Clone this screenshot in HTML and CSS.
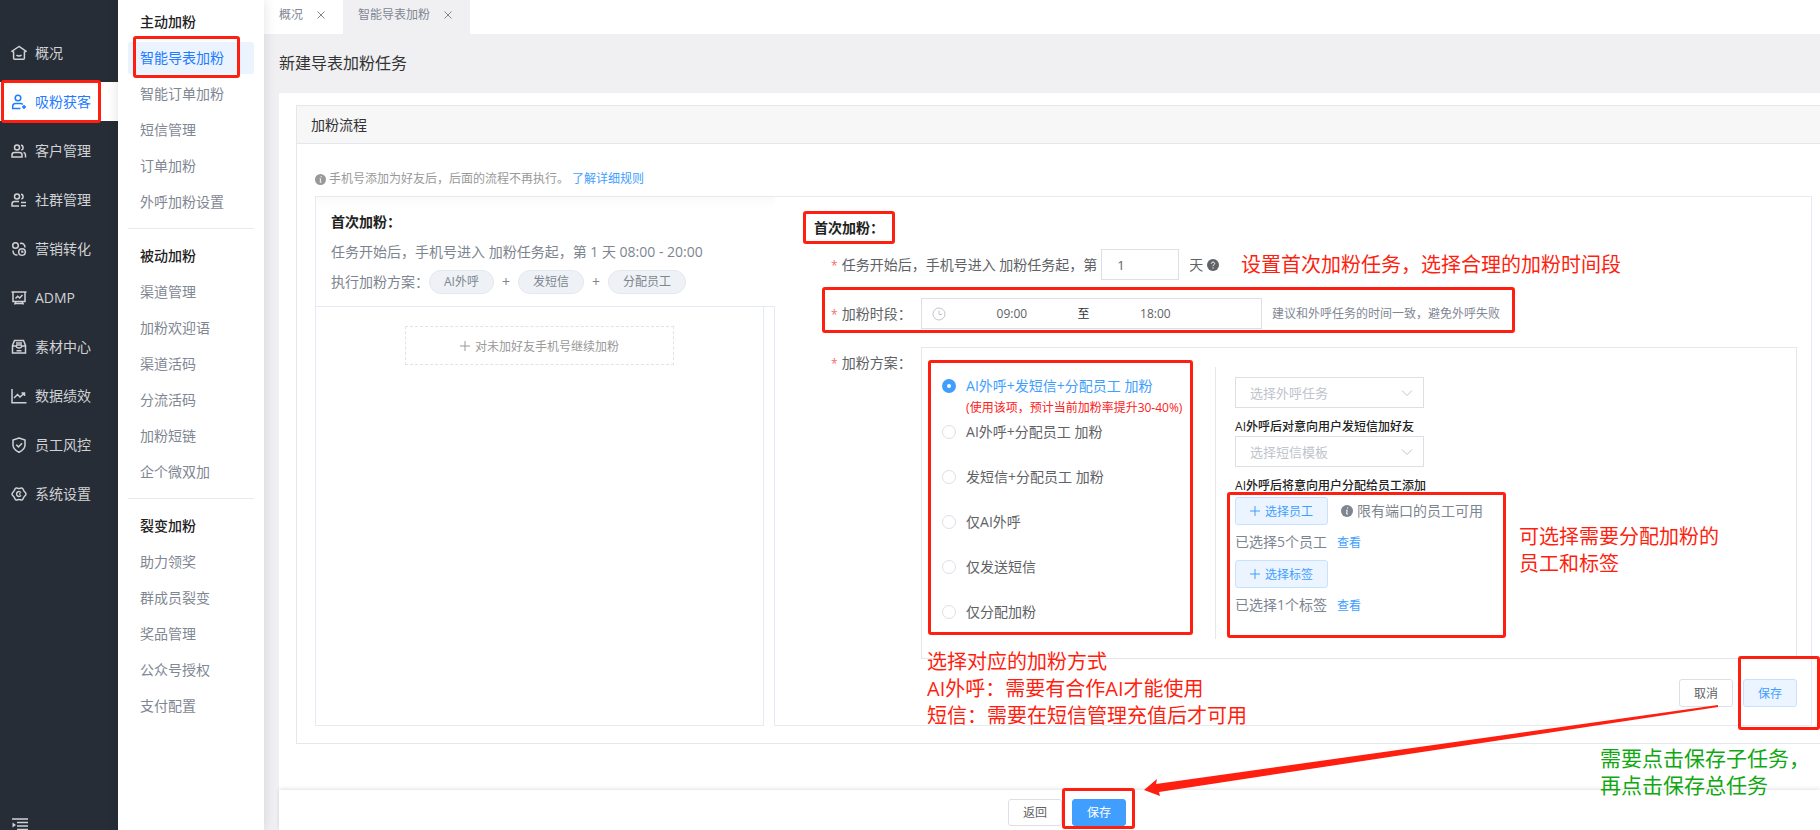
FILE: index.html
```
<!DOCTYPE html>
<html lang="zh-CN">
<head>
  <meta charset="UTF-8" />
  <meta name="viewport" content="width=device-width, initial-scale=1.0"/>
  <title>新建导表加粉任务</title>
  <link rel="stylesheet" href="styles.css">
</head>
<body>

  <!-- 一级菜单 -->
  <nav class="sidebar">
    <a href="#">
      <svg class="icon" viewBox="0 0 16 16"><path d="M8 1.500 1 6.200l1.600.8v6.200a1 1 0 0 0 1 1h8.800a1 1 0 0 0 1-1V7l1.600-.8z"/><path d="M5.500 10c1.200 1.300 3.800 1.300 5 0"/></svg>
      概况
    </a>
    <a href="#" class="active">
      <svg class="icon" viewBox="0 0 16 16"><circle cx="7" cy="4" r="2.800"/><path d="M9.500 14.500H1.700v-2.200c0-1.600 1.200-2.800 2.800-2.800h5c1 0 1.800.4 2.300 1M13 11v4M11 13h4"/></svg>
      吸粉获客
      <span class="mark mark-nav"></span>
    </a>
    <a href="#">
      <svg class="icon" viewBox="0 0 16 16"><circle cx="6" cy="4.500" r="2.500"/><path d="M1 14v-2c0-1.400 1-2.400 2.400-2.400h5.200c1.400 0 2.400 1 2.400 2.400v2zM10 2.200c2.600.2 2.800 4.200.3 4.700M12.500 9.600c1.300.3 2 1.200 2 2.400v2.500"/></svg>
      客户管理
    </a>
    <a href="#">
      <svg class="icon" viewBox="0 0 16 16"><circle cx="6" cy="4.500" r="2.500"/><path d="M8 14H1v-2c0-1.400 1-2.400 2.400-2.400H8M10 2.200c2.600.2 2.800 4.200.3 4.700M10 10.500h5M10 13.700h5"/></svg>
      社群管理
    </a>
    <a href="#">
      <svg class="icon" viewBox="0 0 16 16"><circle cx="4.500" cy="4.500" r="2.800"/><circle cx="11" cy="11" r="3.300"/><path d="M9 2.500c3-.6 5 .8 5 4M2 9.500c0 3 1.500 4.700 4.500 4.500M11 9.500v1.500h1.500"/></svg>
      营销转化
    </a>
    <a href="#">
      <svg class="icon" viewBox="0 0 16 16"><path d="M.5 2h15M2 2v9.500h12V2M4.500 8.500l2.200-2.300 2 1.800L11.500 5M5 11.500 3.500 14.500M11 11.500l1.500 3M4 13.500h8"/></svg>
      ADMP
    </a>
    <a href="#">
      <svg class="icon" viewBox="0 0 16 16"><path d="M3.500 1.500h9l2 5v7.500h-13V6.500zM5 4h6M1.500 7h3.700c.4 2.600 5.200 2.600 5.600 0h3.700M5 6h6M5.500 11.700h5"/></svg>
      素材中心
    </a>
    <a href="#">
      <svg class="icon" viewBox="0 0 16 16"><path d="M1 1v13.800h14.500M3 10l3.500-3.500L9 9l4.500-4M10.500 5h3v3"/></svg>
      数据绩效
    </a>
    <a href="#">
      <svg class="icon" viewBox="0 0 16 16"><path d="M8 1l6 2v5c0 3.500-2.500 5.600-6 7.200C4.500 13.600 2 11.500 2 8V3zM5.200 7.700l2.300 2.200L11 6.300"/></svg>
      员工风控
    </a>
    <a href="#">
      <svg class="icon" viewBox="0 0 16 16"><path d="M4.800 2.200c1-.6 1.800.2 3.200.2s2.200-.8 3.200-.2 1 1.600 1.700 2.700S15 6.700 15 8s-1.400 2-2.100 3.100-.7 2.100-1.700 2.700-1.800-.2-3.200-.2-2.200.8-3.200.2-1-1.600-1.700-2.700S1 9.300 1 8s1.400-2 2.100-3.100.7-2.100 1.700-2.700z"/><path d="M10 6.700a2.400 2.400 0 1 0 0 2.600M8 8h1.500"/></svg>
      系统设置
    </a>
    <button class="collapse" aria-label="展开菜单">
      <svg class="icon" viewBox="0 0 16 16"><path d="M0 1h16M5 4.500h11M5 8h11M5 11.500h11M0 15h16"/><path class="solid" d="M.5 4.500 4 7 .5 9.500z"/></svg>
    </button>
  </nav>

  <!-- 二级菜单 -->
  <nav class="submenu">
    <div class="menu-group">
      <h3>主动加粉</h3>
      <a href="#" class="active">智能导表加粉<span class="mark mark-sub"></span></a>
      <a href="#">智能订单加粉</a>
      <a href="#">短信管理</a>
      <a href="#">订单加粉</a>
      <a href="#">外呼加粉设置</a>
    </div>
    <div class="menu-group">
      <h3>被动加粉</h3>
      <a href="#">渠道管理</a>
      <a href="#">加粉欢迎语</a>
      <a href="#">渠道活码</a>
      <a href="#">分流活码</a>
      <a href="#">加粉短链</a>
      <a href="#">企个微双加</a>
    </div>
    <div class="menu-group">
      <h3>裂变加粉</h3>
      <a href="#">助力领奖</a>
      <a href="#">群成员裂变</a>
      <a href="#">奖品管理</a>
      <a href="#">公众号授权</a>
      <a href="#">支付配置</a>
    </div>
  </nav>

  <main class="main">
    <div class="tabs">
      <div class="tab">概况
        <button class="tab-close" aria-label="关闭"><svg viewBox="0 0 8 8"><path d="M.5.5l7 7M7.500.5l-7 7"/></svg></button>
      </div>
      <div class="tab current">智能导表加粉
        <button class="tab-close" aria-label="关闭"><svg viewBox="0 0 8 8"><path d="M.5.5l7 7M7.500.5l-7 7"/></svg></button>
      </div>
    </div>

    <h1>新建导表加粉任务</h1>

    <div class="page">
      <section class="panel">
        <h2>加粉流程</h2>
        <div class="panel-body">
          <p class="tip">
            <svg class="dot" viewBox="0 0 12 12"><circle cx="6" cy="6" r="6"/><path d="M6.700 2.300v1.300M5 5.200h1.200L5.600 9H7"/></svg>
            手机号添加为好友后，后面的流程不再执行。
            <a href="#">了解详细规则</a>
          </p>

          <div class="flow">
            <!-- 左侧步骤 -->
            <div class="steps">
              <div class="step">
                <h4>首次加粉：</h4>
                <p>任务开始后，手机号进入 加粉任务起，第 1 天 08:00 - 20:00</p>
                <div class="plan">
                  <span>执行加粉方案：</span>
                  <span class="pill">AI外呼</span>
                  <span class="plus">+</span>
                  <span class="pill">发短信</span>
                  <span class="plus">+</span>
                  <span class="pill">分配员工</span>
                </div>
              </div>
              <button class="add-step">
                <svg class="add" viewBox="0 0 10 10"><path d="M5 0v10M0 5h10"/></svg>
                对未加好友手机号继续加粉
              </button>
            </div>

            <!-- 右侧表单 -->
            <form class="detail">
              <h4>首次加粉：<span class="mark mark-title"></span></h4>

              <div class="row">
                <label class="required" for="day">任务开始后，手机号进入 加粉任务起，第</label>
                <input class="day" type="text" id="day" value="1">
                <span class="unit">天
                  <svg class="dot" viewBox="0 0 12 12"><circle cx="6" cy="6" r="6"/><path d="M4.300 4.700c0-2.200 3.400-2.100 3.400-.1C7.700 5.800 6 5.700 6 7.200M6 8.300v1.300"/></svg>
                </span>
                <span class="note note-day">设置首次加粉任务，选择合理的加粉时间段</span>
              </div>

              <div class="row">
                <label class="required fixed" for="start">加粉时段：</label>
                <div class="time-range">
                  <svg class="clock" viewBox="0 0 14 14"><circle cx="7" cy="7" r="6"/><path d="M7 3.500V7.500h3"/></svg>
                  <input type="text" id="start" value="09:00">
                  <span>至</span>
                  <input type="text" id="end" value="18:00" aria-label="结束时间">
                </div>
                <span class="hint">建议和外呼任务的时间一致，避免外呼失败</span>
                <span class="mark mark-time"></span>
              </div>

              <div class="row">
                <span class="required fixed">加粉方案：</span>
                <div class="scheme">
                  <div class="options">
                    <label class="option"><input type="radio" name="scheme" checked>AI外呼+发短信+分配员工 加粉</label>
                    <p class="option-hint">(使用该项，预计当前加粉率提升30-40%)</p>
                    <label class="option"><input type="radio" name="scheme">AI外呼+分配员工 加粉</label>
                    <label class="option"><input type="radio" name="scheme">发短信+分配员工 加粉</label>
                    <label class="option"><input type="radio" name="scheme">仅AI外呼</label>
                    <label class="option"><input type="radio" name="scheme">仅发送短信</label>
                    <label class="option"><input type="radio" name="scheme">仅分配加粉</label>
                    <span class="mark mark-options"></span>
                    <p class="note note-options">选择对应的加粉方式<br>AI外呼：需要有合作AI才能使用<br>短信：需要在短信管理充值后才可用</p>
                  </div>

                  <div class="settings">
                    <div class="select">
                      <select aria-label="选择外呼任务"><option>选择外呼任务</option></select>
                      <svg viewBox="0 0 12 8"><path d="M1 1.500l5 5 5-5"/></svg>
                    </div>
                    <label class="caption" for="sms">AI外呼后对意向用户发短信加好友</label>
                    <div class="select">
                      <select id="sms"><option>选择短信模板</option></select>
                      <svg viewBox="0 0 12 8"><path d="M1 1.500l5 5 5-5"/></svg>
                    </div>
                    <p class="caption">AI外呼后将意向用户分配给员工添加</p>
                    <div class="assign">
                      <div class="pick">
                        <button type="button" class="btn light"><svg class="add" viewBox="0 0 10 10"><path d="M5 0v10M0 5h10"/></svg>选择员工</button>
                        <span class="pick-info">
                          <svg class="dot" viewBox="0 0 12 12"><circle cx="6" cy="6" r="6"/><path d="M6.700 2.300v1.300M5 5.200h1.200L5.600 9H7"/></svg>
                          限有端口的员工可用
                        </span>
                      </div>
                      <p class="picked">已选择5个员工<a href="#">查看</a></p>
                      <div class="pick">
                        <button type="button" class="btn light"><svg class="add" viewBox="0 0 10 10"><path d="M5 0v10M0 5h10"/></svg>选择标签</button>
                      </div>
                      <p class="picked">已选择1个标签<a href="#">查看</a></p>
                      <span class="mark mark-assign"></span>
                      <p class="note note-assign">可选择需要分配加粉的<br>员工和标签</p>
                    </div>
                  </div>
                </div>
              </div>

              <div class="actions">
                <button type="button" class="btn">取消</button>
                <button type="button" class="btn light">保存</button>
                <span class="mark mark-save"></span>
              </div>
            </form>
          </div>
        </div>
      </section>
    </div>

    <footer class="footer">
      <button class="btn">返回</button>
      <span class="save-all">
        <button class="btn primary">保存</button>
        <span class="mark mark-submit"></span>
        <svg class="arrow" viewBox="0 0 575 92"><path d="M0 85 13 74 12 79 574 0 574 2 15 87 16 91z"/></svg>
      </span>
      <p class="note note-save">需要点击保存子任务，<br>再点击保存总任务</p>
    </footer>
  </main>

</body>
</html>
```
FILE: styles.css
```
* {
  box-sizing: border-box;
}

body {
  margin: 0;
  height: 100vh;
  display: flex;
  overflow: hidden;
  font-family: "Open Sans", "Noto Sans CJK SC", sans-serif;
  font-size: 14px;
  line-height: 20px;
  color: #606266;
  background-color: #f0f0f2;
}

h1, h2, h3, h4, p {
  margin: 0;
}

a {
  color: #409eff;
  text-decoration: none;
}

button, input, select {
  font-family: inherit;
  font-size: 12px;
  color: inherit;
}

svg {
  flex: none;
  fill: none;
  stroke: currentColor;
}

/* 一级菜单 */
.sidebar {
  position: relative;
  flex: none;
  width: 118px;
  padding-top: 33px;
  background-color: #272d36;
}

.sidebar a {
  position: relative;
  display: flex;
  align-items: center;
  gap: 8px;
  height: 39px;
  margin-bottom: 10px;
  padding-left: 11px;
  color: #d0d2d5;
}

.sidebar a.active {
  background-color: #fff;
  color: #1f7cff;
}

.icon {
  width: 16px;
  height: 16px;
  stroke-width: 1.5;
}

.solid {
  fill: currentColor;
  stroke: none;
}

.collapse {
  position: absolute;
  left: 12px;
  bottom: -4px;
  padding: 0;
  border: 0;
  background: none;
  color: #d0d2d5;
  line-height: 0;
}

/* 二级菜单 */
.submenu {
  position: relative;
  z-index: 1;
  flex: none;
  width: 146px;
  padding: 6px 10px;
  background-color: #fff;
  box-shadow: 0 0 12px rgba(0, 0, 0, 0.12);
}

.menu-group {
  padding-bottom: 10px;
}

.menu-group + .menu-group {
  padding-top: 11px;
  border-top: 1px solid #e8eaee;
}

.menu-group h3 {
  padding-left: 12px;
  font-size: 14px;
  font-weight: 500;
  line-height: 32px;
  color: #222;
}

.menu-group a {
  position: relative;
  display: block;
  margin-top: 4px;
  padding-left: 12px;
  line-height: 32px;
  color: #7f8793;
}

.menu-group a.active {
  border-radius: 2px;
  background-color: #ebf3ff;
  color: #1f7cff;
}

/* 内容区 */
.main {
  flex: 1;
  min-width: 0;
  display: flex;
  flex-direction: column;
}

.tabs {
  flex: none;
  display: flex;
  height: 34px;
  background-color: #fff;
}

.tab {
  display: flex;
  align-items: center;
  gap: 14px;
  padding: 0 18px 4px 15px;
  font-size: 12px;
  color: #7f8793;
}

.tab.current {
  background-color: #f0f0f2;
}

.tab-close {
  padding: 0;
  border: 0;
  background: none;
  line-height: 0;
}

.tab-close svg {
  width: 8px;
  height: 8px;
}

.main h1 {
  padding-left: 15px;
  font-size: 16px;
  font-weight: 400;
  line-height: 59px;
  color: #333;
}

.page {
  flex: 1;
  min-height: 0;
  margin-left: 15px;
  padding: 12px 0 0 17px;
  background-color: #fff;
}

.panel {
  border: 1px solid #e4e7ee;
  border-right: 0;
}

.panel h2 {
  padding-left: 14px;
  border-bottom: 1px solid #e4e7ee;
  background-color: #f7f7f8;
  font-size: 14px;
  font-weight: 400;
  line-height: 37px;
  color: #333;
}

.panel-body {
  padding: 26px 8px 17px 18px;
}

.tip {
  display: flex;
  align-items: center;
  gap: 3px;
  margin-bottom: 8px;
  font-size: 12px;
  line-height: 18px;
  color: #999;
}

.dot {
  width: 11px;
  height: 11px;
  fill: currentColor;
  stroke: #fff;
}

.dot circle {
  stroke: none;
}

.dot path {
  fill: none;
}

.flow {
  display: flex;
  gap: 10px;
  border-top: 1px solid #e4ebf3;
}

.flow h4 {
  font-size: 14px;
  line-height: 20px;
  color: #222;
}

/* 左侧步骤 */
.steps {
  flex: none;
  width: 30%;
  border: 1px solid #e4ebf3;
  border-top: 0;
}

.step {
  position: relative;
  margin-right: -12px;
  padding: 15px 15px 12px;
  border-bottom: 1px solid #e4ebf3;
  background: linear-gradient(#fafafa, #fff 10px);
  color: #7d8590;
  white-space: nowrap;
}

.step p {
  margin: 10px 0 8px;
}

.plan {
  display: flex;
  align-items: center;
}

.pill {
  padding: 0 14px;
  border: 1px solid #e3e8ee;
  border-radius: 12px;
  background-color: #eef2f6;
  font-size: 12px;
  line-height: 22px;
}

.plus {
  width: 24px;
  text-align: center;
}

.add-step {
  display: flex;
  align-items: center;
  justify-content: center;
  gap: 5px;
  width: 60%;
  height: 39px;
  margin: 19px auto;
  border: 1px dashed #dfe3ea;
  background: none;
  color: #999;
}

.add {
  width: 10px;
  height: 10px;
}

/* 右侧表单 */
.detail {
  flex: 1;
  min-width: 0;
  padding: 21px 14px 18px 39px;
  border: 1px solid #e4ebf3;
  border-top: 0;
}

.detail h4 {
  position: relative;
  margin-bottom: 11px;
}

.row {
  position: relative;
  display: flex;
  margin-bottom: 18px;
  padding-left: 17px;
  line-height: 31px;
  white-space: nowrap;
}

.required {
  height: 31px;
}

.required::before {
  content: "*";
  margin-right: 4px;
  font-size: 12px;
  line-height: 12px;
  color: #f56c6c;
}

.fixed {
  flex: none;
  width: 90px;
}

.day {
  width: 78px;
  height: 31px;
  margin: 0 10px 0 4px;
  padding: 0 15px;
  border: 1px solid #dcdfe6;
  font-size: 13px;
}

.unit {
  display: flex;
  align-items: center;
  gap: 4px;
  height: 31px;
}

.unit .dot {
  width: 12px;
  height: 12px;
}

.time-range {
  display: flex;
  align-items: center;
  width: 341px;
  height: 31px;
  padding: 0 40px 0 10px;
  border: 1px solid #dcdfe6;
}

.time-range input {
  flex: 1;
  min-width: 0;
  padding: 0;
  border: 0;
  background: none;
  text-align: center;
}

.time-range span {
  font-size: 12px;
  color: #303133;
}

.clock {
  width: 14px;
  height: 14px;
  color: #c0c4cc;
}

.hint {
  height: 31px;
  margin-left: 10px;
  font-size: 12px;
  color: #7f8793;
}

.scheme {
  flex: 1;
  display: flex;
  padding: 19px 20px;
  border: 1px solid #e4e7ed;
  line-height: 20px;
}

.options {
  position: relative;
  width: 273px;
  padding: 9px 0 17px;
}

.option {
  display: flex;
  align-items: center;
  gap: 10px;
  margin-top: 25px;
}

.option:first-child {
  margin-top: 0;
}

.option:has(input:checked) {
  color: #409eff;
}

.option input {
  appearance: none;
  width: 14px;
  height: 14px;
  margin: 0;
  border: 1px solid #dcdfe6;
  border-radius: 50%;
  background-color: #fff;
}

.option input:checked {
  border: 5px solid #409eff;
}

.option-hint {
  margin-top: 2px;
  padding-left: 24px;
  font-size: 12px;
  color: #fe2020;
}

.option-hint + .option {
  margin-top: 4px;
}

.settings {
  flex: 1;
  padding: 10px 0 0 19px;
  border-left: 1px solid #e4e7ed;
}

.select {
  position: relative;
  width: 189px;
}

.select select {
  appearance: none;
  display: block;
  width: 100%;
  height: 31px;
  padding: 0 14px;
  border: 1px solid #dcdfe6;
  border-radius: 0;
  background-color: #fff;
  font-size: 13px;
  color: #c0c4cc;
}

.select svg {
  position: absolute;
  right: 11px;
  top: 12px;
  width: 12px;
  height: 8px;
  color: #c0c4cc;
}

.caption {
  display: block;
  margin-top: 10px;
  font-size: 12px;
  font-weight: 500;
  line-height: 18px;
  color: #222;
}

.assign {
  position: relative;
  margin-top: 2px;
}

.pick {
  display: flex;
  align-items: center;
  gap: 13px;
}

.pick-info {
  display: flex;
  align-items: center;
  gap: 4px;
  color: #7d8590;
}

.pick-info .dot {
  width: 12px;
  height: 12px;
}

.picked {
  line-height: 34px;
  color: #7d8590;
}

.picked a {
  margin-left: 10px;
  font-size: 12px;
}

.btn {
  display: flex;
  align-items: center;
  gap: 5px;
  height: 28px;
  padding: 0 14px;
  border: 1px solid #dcdfe6;
  border-radius: 3px;
  background-color: #fff;
}

.btn.light {
  border-color: #c6e2ff;
  background-color: #ecf5ff;
  color: #409eff;
}

.btn.primary {
  border-color: #409eff;
  background-color: #409eff;
  color: #fff;
}

.actions {
  position: relative;
  display: flex;
  justify-content: flex-end;
  gap: 10px;
  margin-top: 20px;
}

.footer {
  position: relative;
  flex: none;
  display: flex;
  align-items: center;
  justify-content: center;
  gap: 10px;
  height: 40px;
  margin-left: 15px;
  padding: 4px 0 0 35px;
  background-color: #fff;
  box-shadow: 0 -1px 4px rgba(0, 0, 0, 0.12);
}

.footer .btn {
  height: 27px;
}

.save-all {
  position: relative;
}

/* 操作说明标注 */
.mark {
  position: absolute;
  z-index: 2;
  border: 3px solid #fe1f10;
  border-radius: 3px;
  pointer-events: none;
}

.mark-nav {
  inset: -2px 17px -2px 1px;
}

.mark-sub {
  inset: -6px 14px -4px 5px;
}

.mark-title {
  left: -11px;
  top: -7px;
  width: 92px;
  height: 33px;
}

.mark-time {
  left: 8px;
  top: -11px;
  width: 693px;
  height: 46px;
}

.mark-options {
  inset: -7px 22px 4px -14px;
}

.mark-assign {
  left: -8px;
  top: -5px;
  width: 279px;
  height: 146px;
}

.mark-save {
  right: -23px;
  top: -23px;
  width: 82px;
  height: 74px;
}

.mark-submit {
  inset: -11px -9px -3px -10px;
}

.note {
  position: absolute;
  z-index: 2;
  font-size: 20px;
  line-height: 27px;
  color: #fe1f10;
  white-space: nowrap;
}

.note-day {
  left: 427px;
  top: 2px;
}

.note-options {
  left: -15px;
  top: 281px;
}

.note-assign {
  left: 284px;
  top: 26px;
}

.note-save {
  right: 10px;
  bottom: 31px;
  font-size: 21px;
  color: #10a810;
}

.arrow {
  position: absolute;
  left: 72px;
  bottom: 29px;
  width: 575px;
  height: 92px;
  fill: #fe1f10;
  stroke: none;
  pointer-events: none;
}
```
